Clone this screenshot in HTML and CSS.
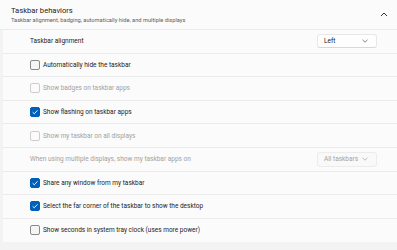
FILE: index.html
```html
<!DOCTYPE html>
<html lang="en">

<head>
    <meta charset="UTF-8">
    <meta name="viewport" content="width=device-width, initial-scale=1.0">
    <title>Taskbar behaviors</title>

    <link rel="stylesheet" href="styles.css">
</head>

<body class="body">
    <div class="card">
        <div class="header">
            <div class="header-text">
                <p class="title">Taskbar behaviors</p>
                <p class="subtitle">Taskbar alignment, badging, automatically hide, and multiple displays</p>
            </div>
            <svg class="chevron-up" width="8" height="5" viewBox="0 0 8 5">
                <path d="M1 4 L4 1 L7 4" fill="none" stroke="#333" stroke-width="1" />
            </svg>
        </div>

        <div class="rows">
            <div class="row">
                <span class="label">Taskbar alignment</span>
                <div class="select">
                    <span>Left</span>
                    <svg width="6" height="4" viewBox="0 0 6 4">
                        <path d="M0.5 0.8 L3 3.2 L5.5 0.8" fill="none" stroke="#666" stroke-width="0.8" />
                    </svg>
                </div>
            </div>

            <label class="row">
                <span class="box"></span>
                <span class="label">Automatically hide the taskbar</span>
            </label>

            <label class="row disabled">
                <span class="box"></span>
                <span class="label">Show badges on taskbar apps</span>
            </label>

            <label class="row">
                <span class="box checked">
                    <svg width="8" height="8" viewBox="0 0 8 8">
                        <path d="M1.6 4.2 L3.3 5.8 L6.5 2.3" fill="none" stroke="#fff" stroke-width="0.9" />
                    </svg>
                </span>
                <span class="label">Show flashing on taskbar apps</span>
            </label>

            <label class="row disabled">
                <span class="box"></span>
                <span class="label">Show my taskbar on all displays</span>
            </label>

            <div class="row disabled">
                <span class="label">When using multiple displays, show my taskbar apps on</span>
                <div class="select select-disabled">
                    <span>All taskbars</span>
                    <svg width="6" height="4" viewBox="0 0 6 4">
                        <path d="M0.5 0.8 L3 3.2 L5.5 0.8" fill="none" stroke="#aaa" stroke-width="0.8" />
                    </svg>
                </div>
            </div>

            <label class="row">
                <span class="box checked">
                    <svg width="8" height="8" viewBox="0 0 8 8">
                        <path d="M1.6 4.2 L3.3 5.8 L6.5 2.3" fill="none" stroke="#fff" stroke-width="0.9" />
                    </svg>
                </span>
                <span class="label">Share any window from my taskbar</span>
            </label>

            <label class="row">
                <span class="box checked">
                    <svg width="8" height="8" viewBox="0 0 8 8">
                        <path d="M1.6 4.2 L3.3 5.8 L6.5 2.3" fill="none" stroke="#fff" stroke-width="0.9" />
                    </svg>
                </span>
                <span class="label">Select the far corner of the taskbar to show the desktop</span>
            </label>

            <label class="row">
                <span class="box"></span>
                <span class="label">Show seconds in system tray clock (uses more power)</span>
            </label>
        </div>
    </div>
</body>

</html>
```

FILE: styles.css
```css
body {
    margin: 0;
    background-color: #f3f3f3;
    font-family: Roboto, "Open Sans", sans-serif;
    color: #1b1b1b;
}

p {
    margin: 0;
}

.card {
    background-color: #f3f3f3;
}

.header {
    height: 30px;
    box-sizing: border-box;
    display: flex;
    align-items: center;
    justify-content: space-between;
    padding: 0 9px 0 11px;
    background-color: #fbfbfb;
    border-bottom: 1px solid #ebebeb;
}

.title {
    font-size: 7.6px;
    line-height: 10px;
    margin-top: 1px;
}

.subtitle {
    font-size: 5.7px;
    line-height: 8px;
    color: #606060;
}

.rows {
    margin-left: 3px;
}

.row {
    height: 22.6px;
    display: flex;
    align-items: center;
    padding: 0 20px 0 27px;
    background-color: #fbfbfb;
    border-bottom: 1px solid #ebebeb;
}

.label {
    font-size: 6.5px;
    flex: 1;
}

.box {
    width: 8px;
    height: 8px;
    margin-right: 3px;
    border: 1px solid #8a8a8a;
    border-radius: 2px;
    background-color: #f5f5f5;
    display: flex;
    align-items: center;
    justify-content: center;
}

.box.checked {
    background-color: #005fb8;
    border-color: #005fb8;
}

.disabled .label {
    color: #a2a2a2;
}

.disabled .box {
    border-color: #cdcdcd;
    background-color: #fbfbfb;
}

.select {
    width: 60px;
    height: 14px;
    box-sizing: border-box;
    display: flex;
    align-items: center;
    justify-content: space-between;
    padding: 0 8px 0 6px;
    background-color: #fefefe;
    border: 1px solid #e8e8e8;
    border-bottom-color: #d8d8d8;
    border-radius: 3px;
    font-size: 6.5px;
}

.select-disabled {
    height: 15px;
    background-color: #f9f9f9;
    border-color: #ececec;
    color: #a2a2a2;
}

.row:last-child {
    border-bottom: none;
    height: 23px;
}
```
